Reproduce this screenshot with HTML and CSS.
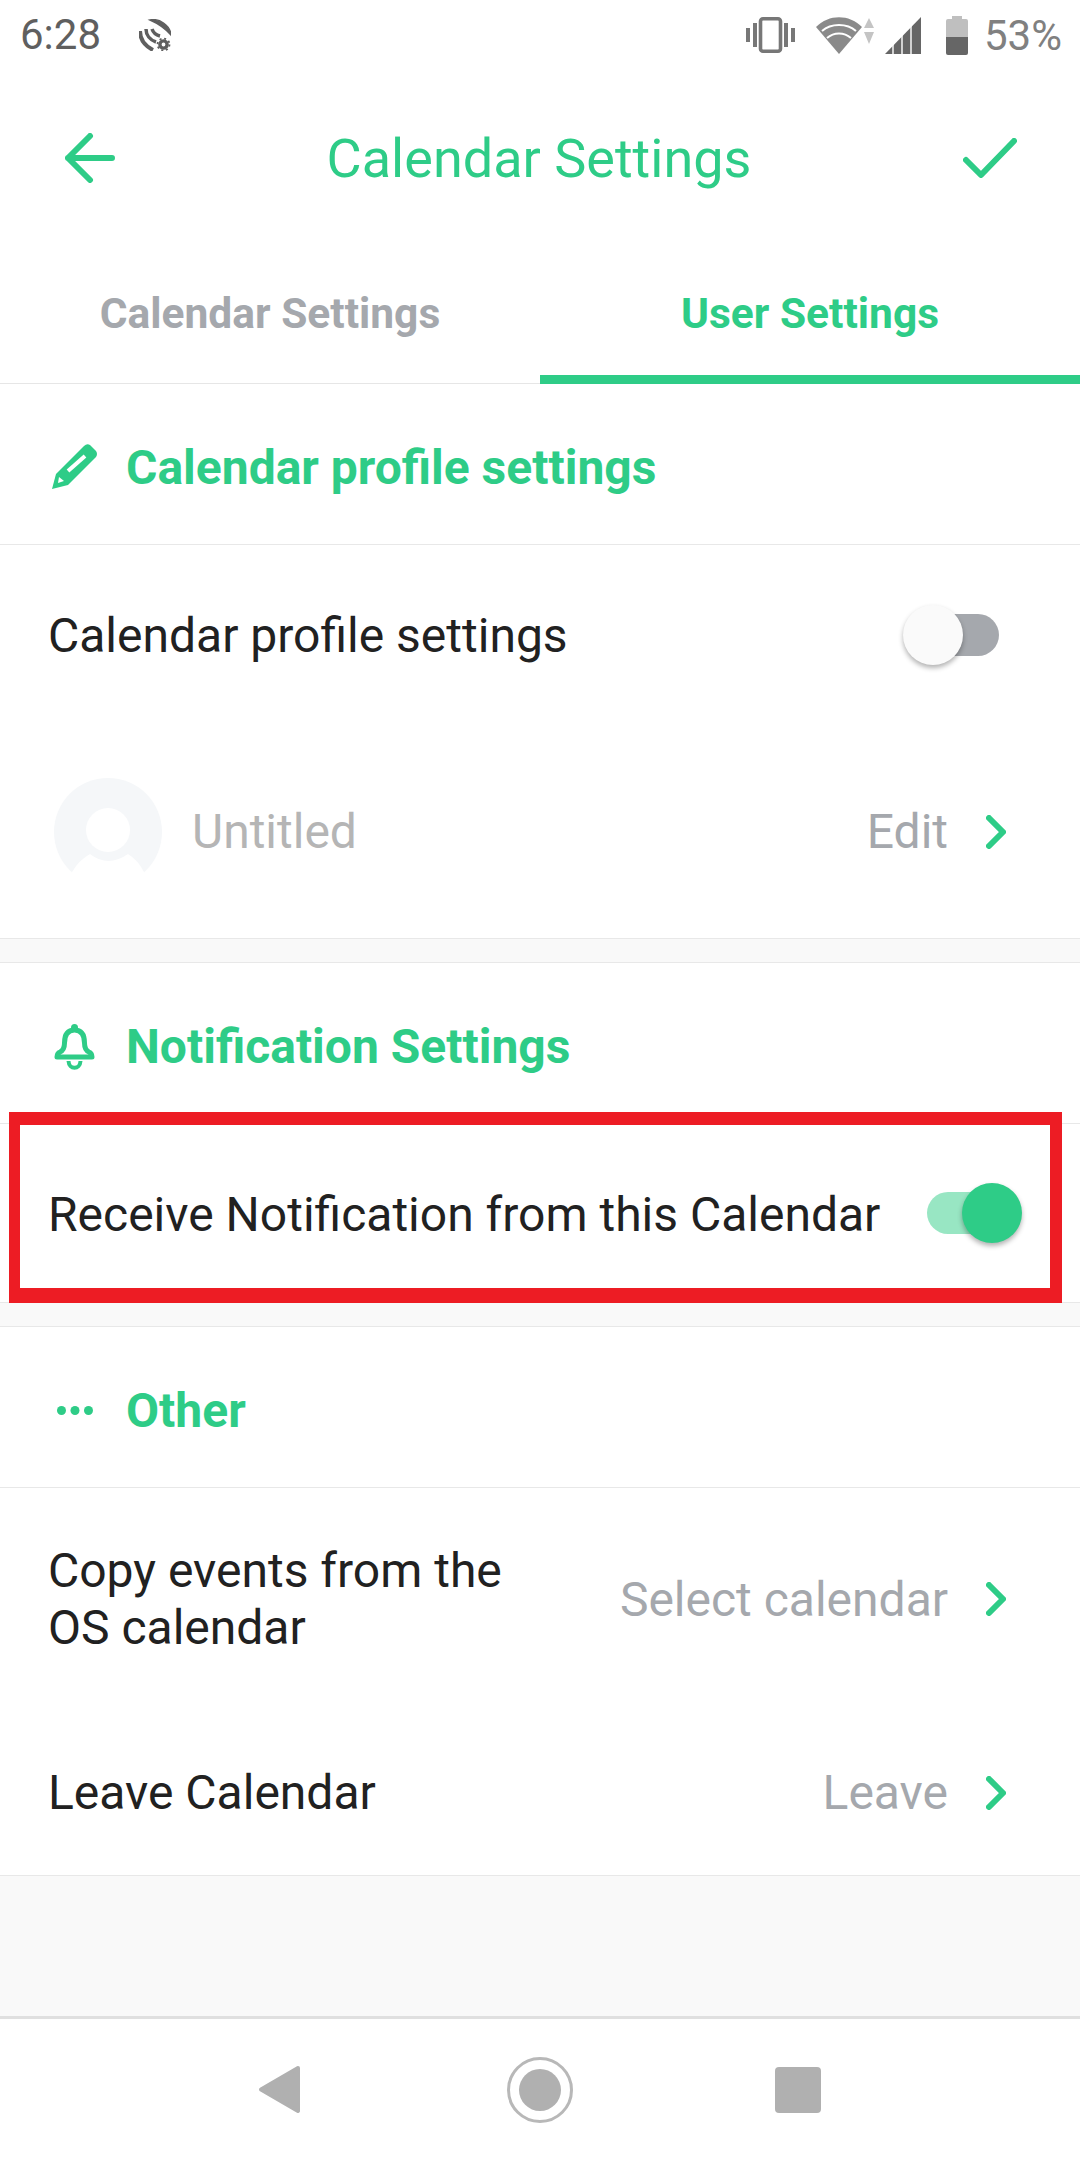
FILE: index.html
```html
<!DOCTYPE html>
<html lang="en">
  <head>
    <meta charset="UTF-8" />
    <meta name="viewport" content="width=device-width, initial-scale=1.0" />
    <title>Calendar Settings</title>
    <link rel="stylesheet" href="styles.css">
  </head>
  <body>
    <div id="phone">
      <div class="status-bar">
        <span class="time">6:28</span>
        <svg class="sat-icon" width="32" height="32" viewBox="0 0 32 32">
          <path d="M11 1 C20 -1 31 6 32 16 C26 9 18 4 11 1 Z" fill="#5f5f5f" stroke="#5f5f5f" stroke-width="1.5"/>
          <path d="M1 12 C1 20 6 27 14 31" fill="none" stroke="#5f5f5f" stroke-width="4"/>
          <path d="M7 10 C7 16 11 21 17 23" fill="none" stroke="#5f5f5f" stroke-width="3.5"/>
          <path d="M13 10 C14 13 17 16 21 17" fill="none" stroke="#5f5f5f" stroke-width="3.5"/>
          <circle cx="24.5" cy="25.5" r="3.6" fill="none" stroke="#5f5f5f" stroke-width="3.4"/>
          <circle cx="24.5" cy="25.5" r="6" fill="none" stroke="#5f5f5f" stroke-width="1.8" stroke-dasharray="2 2.7"/>
        </svg>
        <div class="status-right">
          <svg width="49" height="36" viewBox="0 0 49 36" fill="#777">
            <rect x="0" y="11" width="4" height="14"/>
            <rect x="7" y="6" width="4" height="24"/>
            <rect x="38" y="6" width="4" height="24"/>
            <rect x="45" y="11" width="4" height="14"/>
            <rect x="14.5" y="1.8" width="20" height="32.4" rx="2.5" fill="none" stroke="#777" stroke-width="3.6"/>
          </svg>
          <svg class="wifi" width="58" height="37" viewBox="0 0 58 37">
            <path d="M0 10 C13 -3 33 -3 46 10 L23 37 Z" fill="#8a8a8a"/>
            <path d="M6 14 C15 6 31 6 40 14 M11 21 C18 15 28 15 35 21" fill="none" stroke="#fff" stroke-width="2"/>
            <path d="M53 1 L58 11 H48 Z M48 15 H58 L53 27 Z" fill="#c4c4c4"/>
          </svg>
          <svg class="signal" width="36" height="37" viewBox="0 0 36 37">
            <path d="M36 0 V37 H0 Z" fill="#666"/>
            <path d="M8 0 V37 M17 0 V37 M26 0 V37" stroke="#fff" stroke-width="1.4"/>
          </svg>
          <svg class="battery" width="22" height="39" viewBox="0 0 22 39">
            <path d="M6 0 H16 V3 H20 Q22 3 22 5 V21 H0 V5 Q0 3 2 3 H6 Z" fill="#bfbfbf"/>
            <path d="M0 21 H22 V37 Q22 39 20 39 H2 Q0 39 0 37 Z" fill="#666"/>
          </svg>
          <span class="battery-text">53%</span>
        </div>
      </div>

      <div class="app-header">
        <svg width="50" height="50" viewBox="0 0 50 50" class="back-arrow">
          <path d="M47 25 H3 M25 3 L3 25 L25 47" fill="none" stroke="#2ecc87" stroke-width="6" stroke-linecap="round" stroke-linejoin="round"/>
        </svg>
        <h1>Calendar Settings</h1>
        <svg width="54" height="40" viewBox="0 0 54 40" class="check">
          <path d="M3 22 L18 37 L51 3" fill="none" stroke="#2ecc87" stroke-width="6" stroke-linecap="round" stroke-linejoin="round"/>
        </svg>
      </div>

      <div class="tabs">
        <div class="tab">Calendar Settings</div>
        <div class="tab active">User Settings</div>
      </div>

      <div class="section-title">
        <span class="section-icon">
          <svg class="pencil" width="46" height="46" viewBox="0 0 46 46">
            <path d="M0 46 L4 31 L32 3 Q35 0 38 2 L44 8 Q46 11 44 14 L16 42 Z" fill="#2ecc87"/>
            <path d="M16 28 L33 13" stroke="#fff" stroke-width="4"/>
            <path d="M7 34 L12 38 L6 40 Z" fill="#fff"/>
          </svg>
        </span>
        Calendar profile settings
      </div>
      <div class="row row-first">
        <span>Calendar profile settings</span>
        <div class="toggle off"><div class="knob"></div></div>
      </div>
      <div class="row row-profile">
        <svg class="avatar" width="108" height="108" viewBox="0 0 108 108">
          <circle cx="54" cy="54" r="54" fill="#f5f7f9"/>
          <circle cx="54" cy="52" r="22" fill="#fff"/>
          <path d="M18 94 Q25 82 36 76 Q54 90 74 76 Q84 82 90 94 V108 H18 Z" fill="#fff"/>
        </svg>
        <span class="untitled">Untitled</span>
        <span class="value">Edit</span>
        <svg class="chevron" width="20" height="34" viewBox="0 0 20 34"><path d="M3 3 L17 17 L3 31" fill="none" stroke="#2ecc87" stroke-width="6" stroke-linecap="round" stroke-linejoin="round"/></svg>
      </div>

      <div class="band"></div>

      <div class="section-title">
        <span class="section-icon">
          <svg class="bell" width="41" height="46" viewBox="0 0 41 46" fill="none" stroke="#2ecc87" stroke-width="5" stroke-linejoin="round">
            <path d="M3 33 Q3 29 6 28 Q10.5 26 10.5 19 C10.5 10 14 6 20.5 6 C27 6 30.5 10 30.5 19 Q30.5 26 35 28 Q38 29 38 33 Z"/>
            <circle cx="20.5" cy="3.5" r="3.5" fill="#2ecc87" stroke="none"/>
            <path d="M14.5 37 C15 46 26 46 26.5 37" stroke-width="4"/>
          </svg>
        </span>
        Notification Settings
      </div>
      <div class="row row-highlight">
        <span class="highlight-label">Receive Notification from this Calendar</span>
        <div class="toggle on"><div class="knob"></div></div>
        <div class="highlight"></div>
      </div>

      <div class="band"></div>

      <div class="section-title">
        <span class="section-icon">
          <svg class="dots" width="37" height="9" viewBox="0 0 37 9" fill="#2ecc87">
            <circle cx="4.5" cy="4.5" r="4.5"/><circle cx="18" cy="4.5" r="4.5"/><circle cx="31.5" cy="4.5" r="4.5"/>
          </svg>
        </span>
        Other
      </div>
      <div class="row row-copy">
        <span class="two-lines">Copy events from the<br>OS calendar</span>
        <span class="value">Select calendar</span>
        <svg class="chevron" width="20" height="34" viewBox="0 0 20 34"><path d="M3 3 L17 17 L3 31" fill="none" stroke="#2ecc87" stroke-width="6" stroke-linecap="round" stroke-linejoin="round"/></svg>
      </div>
      <div class="row row-leave">
        <span>Leave Calendar</span>
        <span class="value">Leave</span>
        <svg class="chevron" width="20" height="34" viewBox="0 0 20 34"><path d="M3 3 L17 17 L3 31" fill="none" stroke="#2ecc87" stroke-width="6" stroke-linecap="round" stroke-linejoin="round"/></svg>
      </div>

      <div class="filler"></div>

      <div class="nav-bar">
        <svg width="43" height="49" viewBox="0 0 43 49">
          <path d="M40 3 L3 24.5 L40 46 Z" fill="#b0b0b0" stroke="#b0b0b0" stroke-width="4" stroke-linejoin="round"/>
        </svg>
        <svg width="66" height="66" viewBox="0 0 66 66">
          <circle cx="33" cy="33" r="31.5" fill="none" stroke="#b8b8b8" stroke-width="3"/>
          <circle cx="33" cy="33" r="21" fill="#b0b0b0"/>
        </svg>
        <div class="nav-square"></div>
      </div>
    </div>
  </body>
</html>
```

FILE: styles.css
```css
* {
  box-sizing: border-box;
}

body {
  margin: 0;
  background-color: #ffffff;
  font-family: Roboto, "Noto Sans", sans-serif;
  color: #212121;
}

#phone {
  width: 1080px;
  height: 2160px;
  display: flex;
  flex-direction: column;
  overflow: hidden;
}

.status-bar {
  height: 70px;
  display: flex;
  align-items: center;
  padding: 0 18px 0 20px;
  flex-shrink: 0;
}

.time {
  font-size: 42px;
  color: #5f5f5f;
  line-height: 72px;
}

.sat-icon {
  margin-left: 38px;
}

.status-right {
  margin-left: auto;
  display: flex;
  align-items: center;
}

.wifi {
  margin-left: 21px;
}

.signal {
  margin-left: 11px;
}

.battery {
  margin-left: 25px;
}

.battery-text {
  margin-left: 16px;
  font-size: 42px;
  color: #808080;
}

.app-header {
  height: 176px;
  display: flex;
  align-items: center;
  justify-content: space-between;
  padding: 0 63px 0 65px;
  flex-shrink: 0;
}

.app-header h1 {
  margin: 0;
  font-size: 54px;
  font-weight: 400;
  color: #2ecc87;
}

.tabs {
  height: 138px;
  display: flex;
  border-bottom: 1px solid #e6e6e6;
  flex-shrink: 0;
}

.tab {
  flex: 1;
  display: flex;
  align-items: center;
  justify-content: center;
  padding-bottom: 3px;
  font-size: 42.5px;
  font-weight: 700;
  color: #a5a8ad;
}

.tab.active {
  color: #2ecc87;
  border-bottom: 9px solid #2ecc87;
  margin-bottom: -1px;
  padding-bottom: 0;
  padding-top: 5px;
}

.section-title {
  height: 161px;
  display: flex;
  align-items: center;
  padding-top: 7px;
  border-bottom: 1px solid #e8e8e8;
  font-size: 48px;
  font-weight: 700;
  color: #2ecc87;
  flex-shrink: 0;
}

.section-icon {
  width: 126px;
  padding-left: 52px;
  display: flex;
  align-items: center;
}

.pencil {
  margin-top: -4px;
}

.bell {
  margin-left: 2px;
}

.dots {
  margin-left: 5px;
}

.row {
  display: flex;
  align-items: center;
  padding: 0 74px 0 48px;
  font-size: 48px;
  flex-shrink: 0;
  position: relative;
}

.row-first {
  height: 180px;
  padding-right: 81px;
  justify-content: space-between;
}

.row-profile {
  height: 213px;
  padding-left: 54px;
}

.row-highlight {
  height: 178px;
  padding-right: 69px;
  justify-content: space-between;
}

.highlight-label {
  padding-top: 3px;
}

.row-copy {
  height: 222px;
}

.row-leave {
  height: 166px;
  border-bottom: 1px solid #e8e8e8;
}

.two-lines {
  line-height: 57px;
}

.untitled {
  margin-left: 30px;
  color: #b5b5b5;
}

.value {
  margin-left: auto;
  color: #a5a8ad;
}

.chevron {
  margin-left: 38px;
}

.band {
  height: 25px;
  background-color: #f9f9f9;
  border-top: 1px solid #e8e8e8;
  border-bottom: 1px solid #e8e8e8;
  flex-shrink: 0;
}

.filler {
  flex: 1;
  background-color: #f9f9f9;
}

.toggle {
  width: 84px;
  height: 42px;
  border-radius: 21px;
  position: relative;
}

.toggle.off {
  background-color: #a5a8ad;
}

.toggle.on {
  background-color: #98e6c3;
}

.knob {
  position: absolute;
  top: -9px;
  width: 60px;
  height: 60px;
  border-radius: 50%;
  box-shadow: 0 3px 5px rgba(0, 0, 0, 0.3);
}

.toggle.off .knob {
  left: -12px;
  background-color: #fafafa;
}

.toggle.on .knob {
  right: -11px;
  background-color: #2ecc87;
}

.highlight {
  position: absolute;
  left: 9px;
  right: 18px;
  top: -12px;
  bottom: -1px;
  border-style: solid;
  border-color: #ed1c24;
  border-width: 13px 12px 15px 11px;
}

.nav-bar {
  height: 144px;
  border-top: 3px solid #e0e0e0;
  background-color: #ffffff;
  display: flex;
  align-items: center;
  padding-left: 258px;
  flex-shrink: 0;
}

.nav-bar svg:nth-child(2) {
  margin-left: 206px;
}

.nav-square {
  width: 46px;
  height: 46px;
  margin-left: 202px;
  border-radius: 4px;
  background-color: #b0b0b0;
}
```
